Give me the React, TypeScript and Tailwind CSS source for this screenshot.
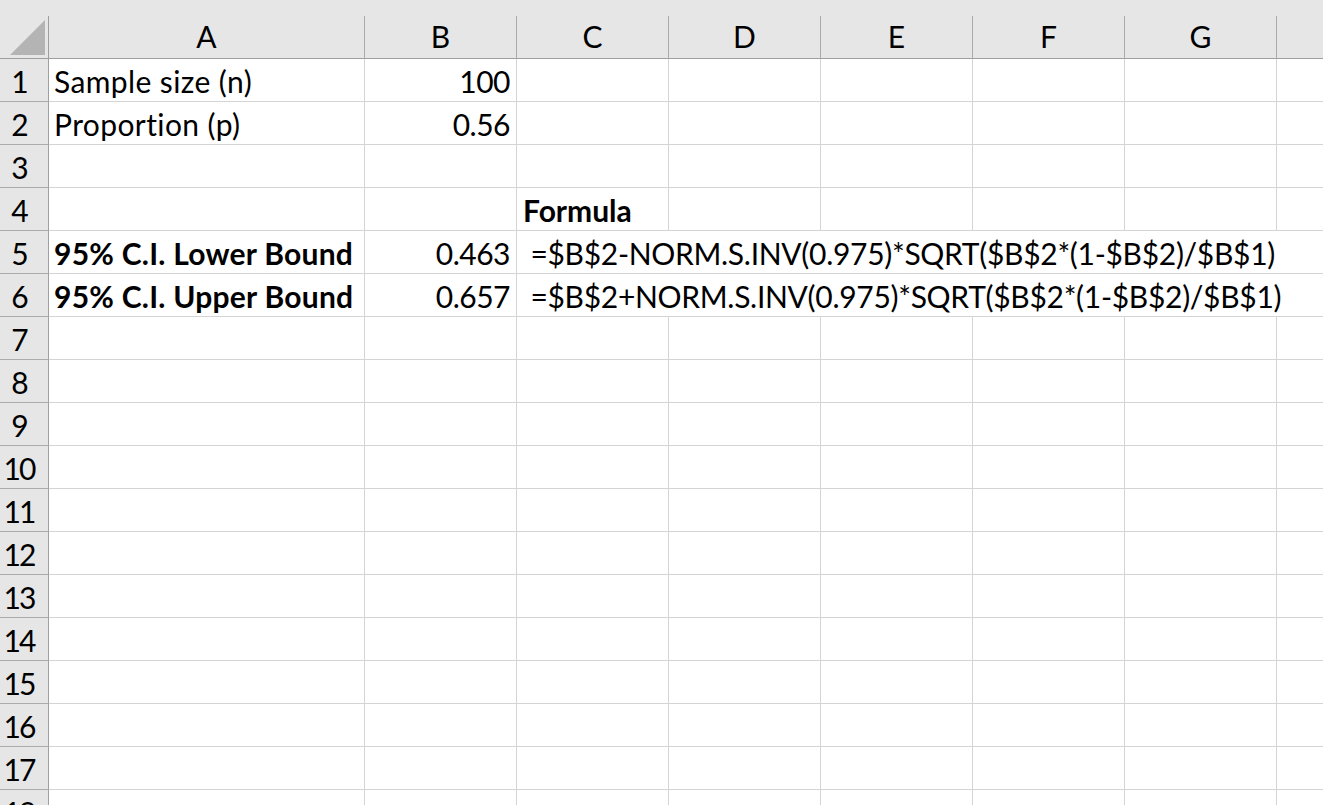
import React from "react";

const COLS = ["C", "D", "E", "F", "G"];

type RowData = { a?: string; aBold?: boolean; b?: string; c?: string; cBold?: boolean; overflow?: boolean };

const rows: RowData[] = [
  { a: "Sample size (n)", b: "100" },
  { a: "Proportion (p)", b: "0.56" },
  {},
  { c: "Formula", cBold: true },
  { a: "95% C.I. Lower Bound", aBold: true, b: "0.463", c: " =$B$2-NORM.S.INV(0.975)*SQRT($B$2*(1-$B$2)/$B$1)", overflow: true },
  { a: "95% C.I. Upper Bound", aBold: true, b: "0.657", c: " =$B$2+NORM.S.INV(0.975)*SQRT($B$2*(1-$B$2)/$B$1)", overflow: true },
];

function HeaderCell({ label, w }: { label: string; w: string }) {
  return (
    <div className={`${w} h-full shrink-0 border-r border-[#ababab] flex items-end justify-center pb-[4px] leading-[36px]`}>
      {label}
    </div>
  );
}

export default function App() {
  const allRows: RowData[] = [...rows];
  while (allRows.length < 18) allRows.push({});
  return (
    <div className="w-[1323px] h-[805px] overflow-hidden bg-white text-black font-[Lato] text-[30px]">
      <div className="h-[16px] bg-[#e6e6e6]" />
      <div className="h-[43px] flex bg-[#e6e6e6] border-b border-[#9f9f9f]">
        <div className="w-[49px] h-full shrink-0 border-r border-[#9f9f9f] relative">
          <svg className="absolute left-0 top-0" width="48" height="42" viewBox="0 0 48 42">
            <polygon points="10,39 45,4 45,39" fill="#b4b4b4" />
          </svg>
        </div>
        <HeaderCell label="A" w="w-[316px]" />
        <HeaderCell label="B" w="w-[152px]" />
        {COLS.map((c) => (
          <HeaderCell key={c} label={c} w="w-[152px]" />
        ))}
        <div className="flex-1 h-full" />
      </div>
      {allRows.map((r, i) => (
        <div key={i} className="h-[43px] flex">
          <div className="w-[49px] h-full shrink-0 bg-[#e6e6e6] border-r border-r-[#9f9f9f] border-b border-b-[#ababab] flex items-end pb-[2px] leading-[36px]">
            <span className="w-[38px] text-center tracking-[-2px]">{i + 1}</span>
          </div>
          <div className={`w-[316px] h-full shrink-0 border-r border-b border-[#d4d4d4] flex items-end pb-[2px] pl-[5px] leading-[36px] whitespace-nowrap ${r.aBold ? "font-bold tracking-[0.25px]" : "tracking-[0.4px]"}`}>
            {r.a ?? ""}
          </div>
          <div className="w-[152px] h-full shrink-0 border-r border-b border-[#d4d4d4] flex items-end justify-end pb-[2px] pr-[6px] leading-[36px] tracking-[-0.5px]">
            {r.b ?? ""}
          </div>
          {r.overflow ? (
            <div className="flex-1 h-full border-b border-[#d4d4d4] flex items-end pb-[2px] pl-[6px] leading-[36px] whitespace-pre tracking-[-0.3px]">
              {r.c}
            </div>
          ) : (
            <>
              {COLS.map((c, j) => (
                <div
                  key={c}
                  className={`w-[152px] h-full shrink-0 border-r border-b border-[#d4d4d4] flex items-end pb-[2px] pl-[6px] leading-[36px] whitespace-pre ${j === 0 && r.cBold ? "font-bold" : ""}`}
                >
                  {j === 0 ? r.c ?? "" : ""}
                </div>
              ))}
              <div className="flex-1 h-full border-b border-[#d4d4d4]" />
            </>
          )}
        </div>
      ))}
    </div>
  );
}
